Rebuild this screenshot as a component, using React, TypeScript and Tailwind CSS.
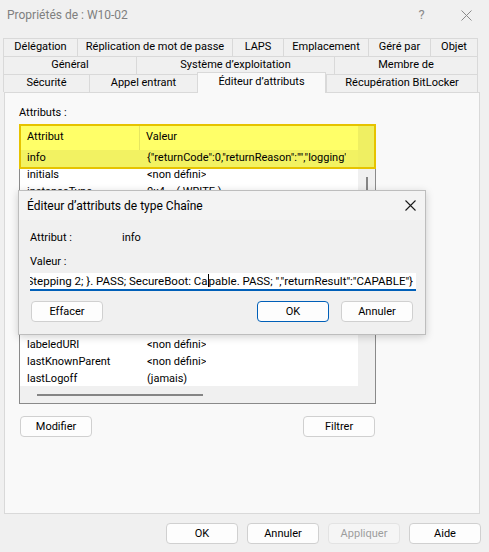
import React from "react";

type BtnProps = { label: string; variant?: "normal" | "primary" | "disabled" };

function Btn({ label, variant = "normal" }: BtnProps) {
  const v =
    variant === "primary"
      ? "border-[#005fb8] bg-[#fdfdfd] text-black"
      : variant === "disabled"
      ? "border-[#e3e3e3] bg-[#f5f5f5] text-[#9d9d9d]"
      : "border-[#d0d0d0] bg-[#fdfdfd] text-black";
  return (
    <div
      className={`flex h-[21px] w-[72px] shrink-0 items-center justify-center rounded-[4px] border text-[11px] leading-none ${v}`}
    >
      {label}
    </div>
  );
}

type TabDef = { label: string; w: number; selected?: boolean };

const tabRows: TabDef[][] = [
  [
    { label: "Délégation", w: 74 },
    { label: "Réplication de mot de passe", w: 155 },
    { label: "LAPS", w: 51 },
    { label: "Emplacement", w: 85 },
    { label: "Géré par", w: 62 },
    { label: "Objet", w: 48 },
  ],
  [
    { label: "Général", w: 133 },
    { label: "Système d’exploitation", w: 198 },
    { label: "Membre de", w: 144 },
  ],
  [
    { label: "Sécurité", w: 86 },
    { label: "Appel entrant", w: 108 },
    { label: "Éditeur d’attributs", w: 129, selected: true },
    { label: "Récupération BitLocker", w: 152 },
  ],
];

const rows: [string, string][] = [
  ["info", '{"returnCode":0,"returnReason":"","logging\''],
  ["initials", "<non défini>"],
  ["instanceType", "0x4 = ( WRITE )"],
  ["ipPhone", "<non défini>"],
  ["isCriticalSystemObject", "<non défini>"],
  ["isDeleted", "<non défini>"],
  ["isPrivilegeHolder", "<non défini>"],
  ["isRecycled", "<non défini>"],
  ["jpegPhoto", "<non défini>"],
  ["kMServer", "<non défini>"],
  ["l", "<non défini>"],
  ["labeledURI", "<non défini>"],
  ["lastKnownParent", "<non défini>"],
  ["lastLogoff", "(jamais)"],
];

const valueBefore = "Family: 6, Model: 142, Stepping 2; }. PASS; SecureBoot: Ca";
const valueAfter = 'pable. PASS; ","returnResult":"CAPABLE"}';

export default function App() {
  return (
    <div className="relative h-[552px] w-[489px] overflow-hidden bg-[#f0f0f0] font-['Roboto',sans-serif] text-[11px] text-black">
      {/* Title bar */}
      <div className="flex h-[30px] items-center">
        <div className="flex-1 pl-[7px] text-[12px] text-[#7f7f7f]">Propriétés de : W10-02</div>
        <div className="flex h-[30px] w-[45px] items-center justify-center text-[13px] text-[#8a8a8a]">?</div>
        <div className="flex h-[30px] w-[45px] items-center justify-center">
          <svg width="11" height="11" viewBox="0 0 11 11">
            <path d="M0.5 0.5 L10.5 10.5 M10.5 0.5 L0.5 10.5" stroke="#8a8a8a" strokeWidth="1" fill="none" />
          </svg>
        </div>
      </div>

      {/* Tabs */}
      <div className="ml-[3px] mt-[8px] flex flex-col">
        {tabRows.map((row, ri) => (
          <div key={ri} className="flex h-[18px] items-start">
            {row.map((t, ti) =>
              t.selected ? (
                <div
                  key={ti}
                  style={{ width: t.w }}
                  className="relative z-10 -mt-[2px] flex h-[21px] items-start justify-center border-x border-t border-[#d9d9d9] bg-[#f9f9f9] pt-[2px] leading-[14px]"
                >
                  {t.label}
                </div>
              ) : (
                <div
                  key={ti}
                  style={{ width: t.w }}
                  className={`flex h-[18px] items-center justify-center border-l border-t border-[#d9d9d9] bg-[#f0f0f0] ${
                    ti === row.length - 1 ? "border-r" : ""
                  }`}
                >
                  {t.label}
                </div>
              )
            )}
          </div>
        ))}
      </div>

      {/* Panel */}
      <div className="ml-[4px] flex h-[422px] w-[476px] flex-col border border-[#d9d9d9] bg-[#f9f9f9]">
        <div className="ml-[14px] mt-[13px] h-[14px] leading-[14px]">Attributs :</div>

        {/* List */}
        <div className="relative ml-[14px] mt-[4px] flex h-[280px] w-[357px] flex-col border border-[#8a8a8a] bg-white">
          <div className="flex h-[261px]">
            <div className="flex w-[338px] flex-col overflow-hidden">
              <div className="flex h-[25px] shrink-0 items-center bg-[#ffff68]">
                <div className="flex h-full w-[120px] items-center border-r border-[#e6e660] pl-[7px]">Attribut</div>
                <div className="pl-[6px]">Valeur</div>
              </div>
              {rows.map(([a, v], i) => (
                <div
                  key={a}
                  className={`flex h-[17px] shrink-0 items-center whitespace-nowrap ${i === 0 ? "bg-[#f2f262]" : ""}`}
                >
                  <div className="w-[121px] shrink-0 overflow-hidden pl-[7px]">{a}</div>
                  <div className="overflow-hidden pl-[6px]">{v}</div>
                </div>
              ))}
            </div>
            <div className="flex w-[17px] flex-col bg-[#f0f0f0]">
              <div className="h-[42px] bg-[#efef62]" />
              <div className="ml-[8px] mt-[10px] h-[140px] w-[2px] bg-[#858585]" />
            </div>
          </div>
          <div className="flex h-[17px] items-center bg-[#f0f0f0]">
            <div className="ml-[17px] h-[2px] w-[166px] bg-[#858585]" />
          </div>

          {/* Highlight outline */}
          <div className="absolute -left-px -right-px -top-px h-[45px] border-2 border-[#e6c300]" />
        </div>

        {/* Modifier / Filtrer */}
        <div className="ml-[15px] mt-[12px] flex w-[355px] justify-between">
          <Btn label="Modifier" />
          <Btn label="Filtrer" />
        </div>
      </div>

      {/* Bottom buttons */}
      <div className="mr-[8px] mt-[9px] flex justify-end gap-[9px]">
        <Btn label="OK" />
        <Btn label="Annuler" />
        <Btn label="Appliquer" variant="disabled" />
        <Btn label="Aide" />
      </div>

      {/* String editor dialog */}
      <div className="absolute left-[18px] top-[190px] flex h-[145px] w-[408px] flex-col border border-[#bdbdbd] bg-[#f0f0f0] shadow-[0_2px_8px_rgba(0,0,0,0.18)]">
        <div className="flex h-[29px] items-center bg-[#f3f3f3]">
          <div className="flex-1 pl-[8px] text-[12px]">Éditeur d’attributs de type Chaîne</div>
          <div className="mr-[9px] flex h-[29px] w-[12px] items-center justify-center">
            <svg width="11" height="11" viewBox="0 0 11 11">
              <path d="M0.5 0.5 L10.5 10.5 M10.5 0.5 L0.5 10.5" stroke="#1a1a1a" strokeWidth="1.1" fill="none" />
            </svg>
          </div>
        </div>
        <div className="flex flex-col px-[11px]">
          <div className="mt-[11px] flex h-[14px] items-center">
            <div className="w-[92px]">Attribut :</div>
            <div>info</div>
          </div>
          <div className="mt-[10px] flex h-[14px] items-center">Valeur :</div>
          <div className="mt-[4px] flex h-[18px] w-[386px] items-center justify-end overflow-hidden whitespace-nowrap border-b-2 border-[#005fb8] bg-white pr-[3px] text-[11.5px]">
            <span>
              {valueBefore}
              <span className="inline-block h-[13px] w-px translate-y-[2px] bg-black" />
              {valueAfter}
            </span>
          </div>
          <div className="mt-[10px] flex">
            <div className="ml-[1px]">
              <Btn label="Effacer" />
            </div>
            <div className="ml-[154px]">
              <Btn label="OK" variant="primary" />
            </div>
            <div className="ml-[12px]">
              <Btn label="Annuler" />
            </div>
          </div>
        </div>
      </div>
    </div>
  );
}
